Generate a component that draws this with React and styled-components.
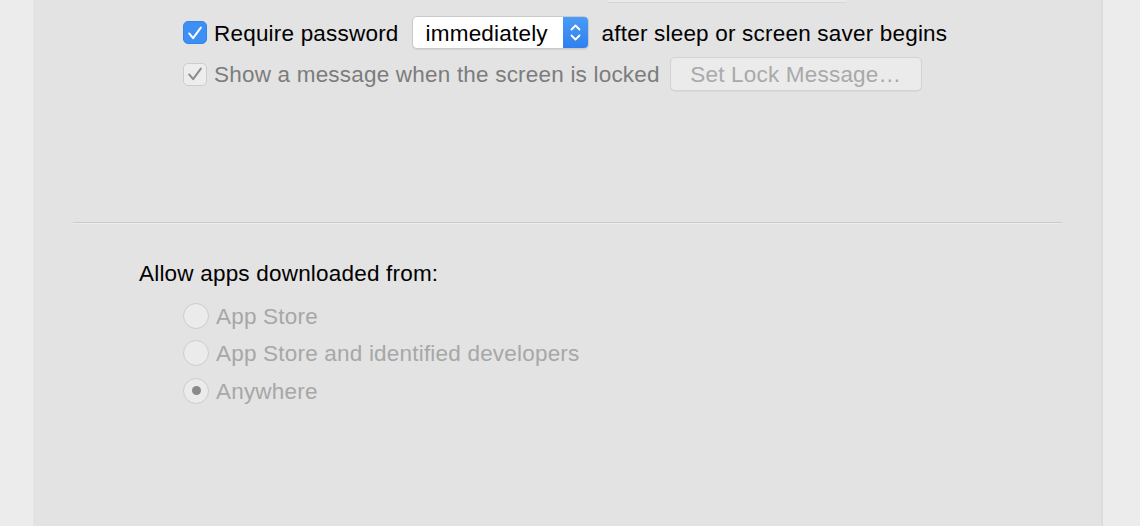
import React from "react";
import styled, { createGlobalStyle } from "styled-components";

const GlobalStyle = createGlobalStyle`
  html, body {
    margin: 0;
    padding: 0;
    background: #ececec;
    overflow: hidden;
  }
  body {
    font-family: "Liberation Sans", Arial, sans-serif;
    -webkit-font-smoothing: antialiased;
  }
`;

const Page = styled.div`
  display: flex;
  height: 526px;
  padding: 0 37px 0 33px;
  background: #ececec;
`;

const Panel = styled.div`
  flex: 1;
  display: flex;
  flex-direction: column;
  background: #e3e3e3;
  border-left: 1px solid #e6e6e6;
  border-right: 2px solid #dcdcdc;
  box-shadow: inset 1px 0 0 #e1e1e1;
`;

const CutOff = styled.div`
  width: 240px;
  height: 2px;
  margin-left: 573px;
  background: #e9e9e9;
  border-bottom: 1px solid #d6d6d6;
  border-radius: 0 0 4px 4px;
`;

const Settings = styled.div`
  display: flex;
  flex-direction: column;
  gap: 8px;
  margin-top: 13px;
  padding-left: 149px;
`;

const Row = styled.div`
  display: flex;
  align-items: center;
  height: ${({ $h }) => $h}px;
`;

const Text = styled.span`
  font-size: 22.5px;
  letter-spacing: 0.2px;
  padding-top: 2px;
  color: ${({ $dim }) => ($dim ? "#7c7c7c" : "#000")};
  white-space: nowrap;
  margin-left: ${({ $ml }) => $ml || 0}px;
`;

const Box = styled.span`
  width: 24px;
  height: 23px;
  box-sizing: border-box;
  border-radius: 5px;
  display: flex;
  align-items: center;
  justify-content: center;
  flex-shrink: 0;
  background: ${({ $on }) => ($on ? "#3d8ef5" : "#ededed")};
  border: 1px solid ${({ $on }) => ($on ? "#3584ec" : "#cdcdcd")};
  svg {
    width: 18px;
    height: 18px;
  }
`;

const Check = ({ color }) => (
  <svg viewBox="0 0 16 16" fill="none">
    <path
      d="M2.8 8.4 L6.3 12.6 L13.2 3.2"
      stroke={color}
      strokeWidth="1.8"
      strokeLinecap="round"
      strokeLinejoin="round"
    />
  </svg>
);

const Select = styled.div`
  display: flex;
  align-items: stretch;
  width: 177px;
  height: 33px;
  box-sizing: border-box;
  margin: 0 13px;
  border-radius: 5px;
  background: #fff;
  border: 1px solid #cacaca;
  box-shadow: 0 1px 1px rgba(0, 0, 0, 0.08);
  overflow: hidden;
`;

const SelectValue = styled.span`
  flex: 1;
  display: flex;
  align-items: center;
  padding: 2px 0 0 13px;
  font-size: 22.5px;
  letter-spacing: 0.2px;
  color: #000;
`;

const Stepper = styled.span`
  width: 25px;
  display: flex;
  align-items: center;
  justify-content: center;
  background: linear-gradient(#4b9bf8, #2f7ff0);
  svg {
    width: 15px;
    height: 27px;
  }
`;

const Button = styled.div`
  width: 252px;
  height: 34px;
  box-sizing: border-box;
  margin-left: 10px;
  padding-top: 2px;
  display: flex;
  align-items: center;
  justify-content: center;
  border-radius: 5px;
  background: #ebebeb;
  border: 1px solid #d3d3d3;
  box-shadow: 0 1px 0 rgba(0, 0, 0, 0.04);
  font-size: 22.5px;
  letter-spacing: 0.2px;
  color: #a9a9a9;
`;

const Separator = styled.div`
  height: 1px;
  margin: 131px 39px 0 39px;
  background: #cbcbcb;
  box-shadow: 0 1px 0 #ebebeb;
`;

const Heading = styled.div`
  margin-top: 37px;
  padding-left: 105px;
  line-height: 28px;
  font-size: 22.5px;
  letter-spacing: 0.2px;
  color: #000;
`;

const RadioList = styled.div`
  display: flex;
  flex-direction: column;
  margin-top: 9px;
  padding-left: 149px;
`;

const RadioRow = styled.div`
  display: flex;
  align-items: center;
  height: 37.5px;
`;

const Radio = styled.span`
  width: 26px;
  height: 26px;
  box-sizing: border-box;
  border-radius: 50%;
  background: #ebebeb;
  border: 1px solid #cdcdcd;
  display: flex;
  align-items: center;
  justify-content: center;
  flex-shrink: 0;
  &::after {
    content: "";
    width: 9px;
    height: 9px;
    border-radius: 50%;
    background: ${({ $on }) => ($on ? "#8a8a8a" : "transparent")};
  }
`;

const RadioLabel = styled.span`
  margin-left: 7px;
  padding-top: 2px;
  font-size: 22.5px;
  letter-spacing: 0.2px;
  color: #a7a7a7;
  white-space: nowrap;
`;

const sources = [
  { label: "App Store", on: false },
  { label: "App Store and identified developers", on: false },
  { label: "Anywhere", on: true },
];

export default function App() {
  return (
    <>
      <GlobalStyle />
      <Page>
        <Panel>
          <CutOff />
          <Settings>
            <Row $h={33}>
              <Box $on>
                <Check color="#fff" />
              </Box>
              <Text $ml={7}>Require password</Text>
              <Select>
                <SelectValue>immediately</SelectValue>
                <Stepper>
                  <svg viewBox="0 0 15 27" fill="none">
                    <path
                      d="M3.5 10.5 L7.5 6.5 L11.5 10.5 M3.5 16.5 L7.5 20.5 L11.5 16.5"
                      stroke="#fff"
                      strokeWidth="1.8"
                      strokeLinecap="round"
                      strokeLinejoin="round"
                    />
                  </svg>
                </Stepper>
              </Select>
              <Text>after sleep or screen saver begins</Text>
            </Row>
            <Row $h={34}>
              <Box>
                <Check color="#8c8c8c" />
              </Box>
              <Text $dim $ml={7}>
                Show a message when the screen is locked
              </Text>
              <Button>Set Lock Message…</Button>
            </Row>
          </Settings>
          <Separator />
          <Heading>Allow apps downloaded from:</Heading>
          <RadioList>
            {sources.map((s) => (
              <RadioRow key={s.label}>
                <Radio $on={s.on} />
                <RadioLabel>{s.label}</RadioLabel>
              </RadioRow>
            ))}
          </RadioList>
        </Panel>
      </Page>
    </>
  );
}
